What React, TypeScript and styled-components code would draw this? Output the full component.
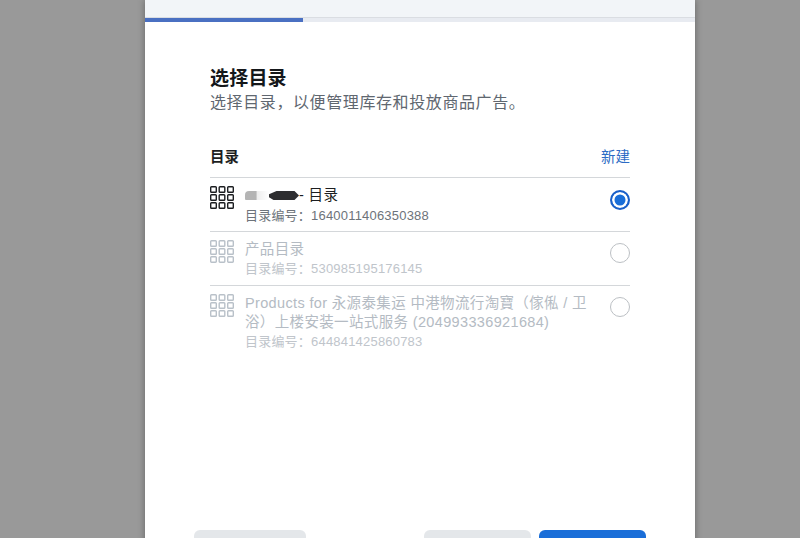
import React from "react";
import styled, {createGlobalStyle} from "styled-components";

interface Catalog {
  id: string;
  name: React.ReactNode;
  selected?: boolean;
  disabled?: boolean;
}

const GlobalStyle = createGlobalStyle`
  html, body {
    margin: 0;
    padding: 0;
    background: #999999;
    font-family: "Liberation Sans", "Noto Sans CJK SC", sans-serif;
  }
`;
const Page = styled.div`
  height: 538px;
  overflow: hidden;
  padding-left: 145px;
  background: #999999;
`;
const Modal = styled.div`
  width: 550px;
  height: 566px;
  background: #fff;
  display: flex;
  flex-direction: column;
  box-shadow: 0 0 7px rgba(0, 0, 0, 0.35);
`;
const TopBar = styled.div`
  height: 17px;
  background: #f2f5f8;
`;
const Progress = styled.div`
  height: 5px;
  background: #e8ebf1;
  border-top: 1px solid #dadde2;
  box-sizing: border-box;
`;
const ProgressFill = styled.div`
  width: 158px;
  height: 4px;
  background: #4a70c2;
`;
const Content = styled.div`
  padding: 45px 65px 0;
  flex: 1;
`;
const Title = styled.h1`
  margin: 0;
  font-size: 19px;
  line-height: 24px;
  letter-spacing: 0.2px;
  font-weight: 700;
  color: #14171a;
`;
const Subtitle = styled.p`
  margin: 0;
  font-size: 16px;
  line-height: 24px;
  letter-spacing: 0.6px;
  color: #606770;
`;
const SectionHead = styled.div`
  display: flex;
  justify-content: space-between;
  align-items: center;
  height: 42px;
  margin-top: 20px;
  padding-bottom: 2px;
  box-sizing: border-box;
`;
const SectionTitle = styled.span`
  font-size: 14.5px;
  font-weight: 700;
  color: #1c1e21;
`;
const NewLink = styled.a`
  font-size: 14.5px;
  color: #2c6bc4;
`;
const Row = styled.div`
  display: flex;
  align-items: flex-start;
  box-sizing: border-box;
  min-height: 54px;
  border-top: 1px solid #d4d7da;
  padding: 8px 0 6px;
`;
const IconSvg = styled.svg`
  width: 24px;
  height: 23px;
  flex: none;
`;
const RowText = styled.div`
  flex: 1;
  margin: 0 20px 0 11px;
`;
const RowName = styled.div<{$disabled?: boolean}>`
  font-size: 14.5px;
  line-height: 19px;
  letter-spacing: 0.35px;
  color: ${p => (p.$disabled ? "#b4bbc3" : "#1c1e21")};
`;
const RowId = styled.div<{$disabled?: boolean}>`
  margin-top: ${p => (p.$disabled ? "0" : "1px")};
  font-size: 13px;
  line-height: 19px;
  letter-spacing: 0.2px;
  color: ${p => (p.$disabled ? "#c0c5cb" : "#6d737a")};
`;
const GreyBlot = styled.span`
  display: inline-block;
  width: 24px;
  height: 9px;
  border-radius: 4px 0 0 1px;
  background: linear-gradient(90deg, #b4b4b4 45%, #eeeeee 52%, #ffffff);
`;
const DarkBlot = styled.span`
  display: inline-block;
  width: 30px;
  height: 9px;
  clip-path: polygon(0 35%, 25% 0, 85% 0, 100% 50%, 85% 100%, 15% 100%, 0 70%);
  background: #2e2e30;
`;
const Radio = styled.span<{$selected?: boolean}>`
  width: 20px;
  height: 20px;
  flex: none;
  margin-top: ${p => (p.$selected ? "4px" : "3px")};
  box-sizing: border-box;
  border-radius: 50%;
  border: ${p => (p.$selected ? "2px solid #1a5fc8" : "1.5px solid #bcc0c4")};
  background: ${p => (p.$selected ? "#1a6ed8" : "#fff")};
  box-shadow: ${p => (p.$selected ? "inset 0 0 0 2.5px #fff" : "none")};
`;
const Footer = styled.div`
  display: flex;
  justify-content: space-between;
  padding: 0 49px;
`;
const FooterRight = styled.div`
  display: flex;
  gap: 8px;
`;
const GreyButton = styled.div<{$width: number}>`
  width: ${p => p.$width}px;
  height: 36px;
  border-radius: 6px;
  background: #e4e7ea;
`;
const PrimaryButton = styled.div`
  width: 107px;
  height: 36px;
  border-radius: 6px;
  background: #1a6ed8;
`;

const catalogs: Catalog[] = [
  {
    id: "1640011406350388",
    name: (
      <>
        <GreyBlot />
        <DarkBlot />- 目录
      </>
    ),
    selected: true,
  },
  {id: "530985195176145", name: "产品目录", disabled: true},
  {
    id: "644841425860783",
    name: "Products for 永源泰集运 中港物流行淘寶（傢俬 / 卫浴）上楼安装一站式服务 (204993336921684)",
    disabled: true,
  },
];

const GridIcon = ({disabled}: {disabled?: boolean}) => (
  <IconSvg viewBox="0 0 24 23" fill="none" stroke={disabled ? "#b9c1c9" : "#1c1e21"} strokeWidth="1.4">
    {[0, 8, 16].map(y =>
      [0, 8.5, 17].map(x => (
        <rect key={`${x}-${y}`} x={x + 0.7} y={y + 0.7} width="5.6" height="5.6" rx="0.8" />
      )),
    )}
  </IconSvg>
);

const App = () => {
  return (
    <>
      <GlobalStyle />
      <Page>
        <Modal>
          <TopBar />
          <Progress>
            <ProgressFill />
          </Progress>
          <Content>
            <Title>选择目录</Title>
            <Subtitle>选择目录，以便管理库存和投放商品广告。</Subtitle>
            <SectionHead>
              <SectionTitle>目录</SectionTitle>
              <NewLink>新建</NewLink>
            </SectionHead>
            {catalogs.map(catalog => (
              <Row key={catalog.id}>
                <GridIcon disabled={catalog.disabled} />
                <RowText>
                  <RowName $disabled={catalog.disabled}>{catalog.name}</RowName>
                  <RowId $disabled={catalog.disabled}>目录编号：{catalog.id}</RowId>
                </RowText>
                <Radio $selected={catalog.selected} />
              </Row>
            ))}
          </Content>
          <Footer>
            <GreyButton $width={112} />
            <FooterRight>
              <GreyButton $width={107} />
              <PrimaryButton />
            </FooterRight>
          </Footer>
        </Modal>
      </Page>
    </>
  );
};

export default App;
